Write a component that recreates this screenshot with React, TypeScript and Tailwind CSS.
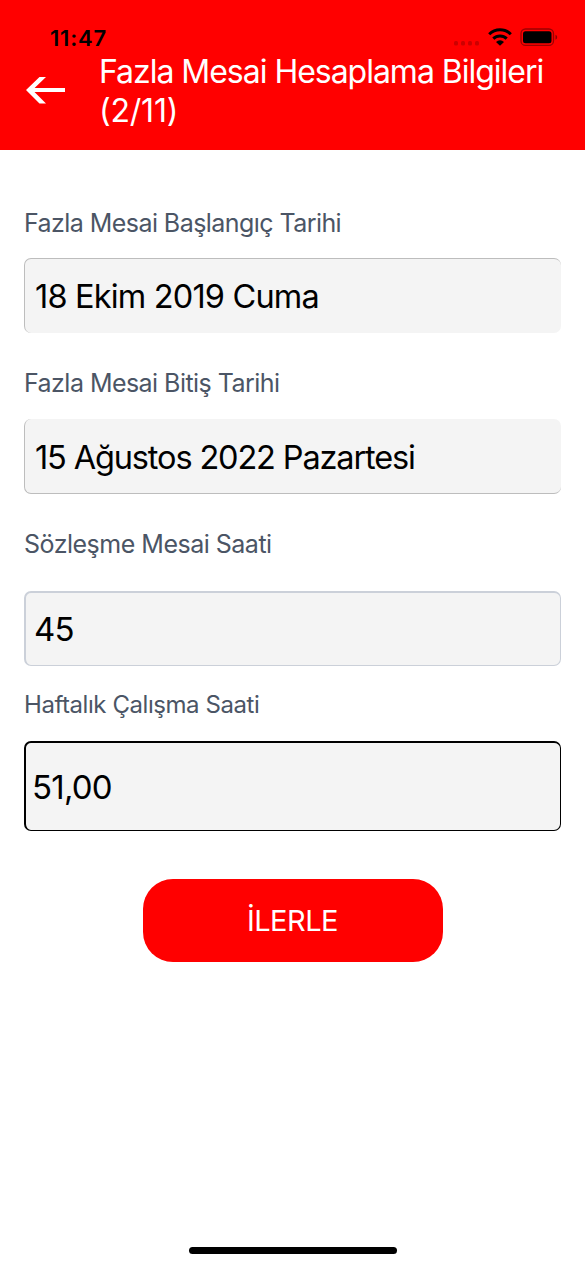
import { useState } from 'react';

interface Field {
  id: string;
  label: string;
  value: string;
  labelClass: string;
  boxClass: string;
}

const fields: Field[] = [
  {
    id: 'start',
    label: 'Fazla Mesai Başlangıç Tarihi',
    value: '18 Ekim 2019 Cuma',
    labelClass: 'mb-4 text-[25px] tracking-[-0.56px]',
    boxClass: 'h-[75px] border-t border-l border-[#bdbdbd] pl-[10px] text-[32.5px] tracking-[-0.82px]',
  },
  {
    id: 'end',
    label: 'Fazla Mesai Bitiş Tarihi',
    value: '15 Ağustos 2022 Pazartesi',
    labelClass: 'mt-[31px] mb-[17px] text-[25px] tracking-[-0.54px]',
    boxClass: 'h-[75px] border-b border-l border-[#bdbdbd] pl-[10px] pt-[2px] text-[32.5px] tracking-[-1.14px]',
  },
  {
    id: 'contract',
    label: 'Sözleşme Mesai Saati',
    value: '45',
    labelClass: 'mt-[31px] mb-7 text-[25px] tracking-[-0.5px]',
    boxClass: 'h-[75px] border border-t-2 border-l-2 border-[#cbd0d9] pl-[8px] text-[33px] tracking-[-0.8px]',
  },
  {
    id: 'weekly',
    label: 'Haftalık Çalışma Saati',
    value: '51,00',
    labelClass: 'mt-5 mb-[17px] text-[24px] tracking-[-0.44px]',
    boxClass: 'h-[90px] border border-t-2 border-l-2 border-black pl-[6px] text-[33px] tracking-[-0.8px]',
  },
];

function StatusIcons() {
  return (
    <svg width="106" height="20" viewBox="0 0 106 20" aria-hidden="true">
      <g fill="#cc0000">
        <rect x="1" y="14" width="4" height="4.5" rx="1.5" />
        <rect x="8" y="14" width="4" height="4.5" rx="1.5" />
        <rect x="15" y="14" width="4" height="4.5" rx="1.5" />
        <rect x="22" y="14" width="4" height="4.5" rx="1.5" />
      </g>
      {/* wifi */}
      <g fill="none" stroke="#000" strokeWidth="3">
        <path d="M36.2 7.2a15.4 15.4 0 0 1 21.6 0" />
        <path d="M40.3 11.6a9.6 9.6 0 0 1 13.4 0" />
      </g>
      <path d="M47 18.8 43 14.9a5.8 5.8 0 0 1 8 0Z" />
      {/* battery */}
      <rect x="68" y="2" width="32.5" height="16.4" rx="4.5" fill="none" stroke="#9c0000" strokeWidth="1.3" />
      <rect x="70" y="4.2" width="28.5" height="12" rx="2.5" />
      <path d="M102.5 7.7v5c2.2-.8 2.2-4.2 0-5Z" fill="#8c0000" />
    </svg>
  );
}

function BackArrow() {
  return (
    <svg width="40" height="28" viewBox="0 0 40 28" aria-hidden="true">
      <path d="M39 14H4" stroke="#fff" strokeWidth="4" />
      <path d="M13.5 1H20L6.5 14 20 27.5H13.5L0 14Z" fill="#fff" />
    </svg>
  );
}

function FormField({ field, onChange }: { field: Field; onChange: (value: string) => void }) {
  return (
    <div className="flex flex-col">
      <label htmlFor={field.id} className={`h-[38px] leading-[38px] whitespace-nowrap text-[#4b5565] ${field.labelClass}`}>
        {field.label}
      </label>
      <input
        id={field.id}
        type="text"
        value={field.value}
        onChange={(e) => onChange(e.target.value)}
        className={`w-full rounded-[7px] bg-[#f4f4f4] text-black outline-none ${field.boxClass}`}
      />
    </div>
  );
}

export default function App() {
  const [values, setValues] = useState<Record<string, string>>({});

  return (
    <div className="flex h-[1266px] w-[585px] flex-col overflow-hidden bg-white font-['Inter',sans-serif]">
      <header className="h-[150px] shrink-0 bg-[#ff0000]">
        <div className="flex h-[52px] items-start justify-between pt-[27px] pr-[26px] pl-[50px]">
          <span className="text-[22px] leading-[22px] font-semibold tracking-[0.8px] text-black">11:47</span>
          <StatusIcons />
        </div>
        <div className="flex items-start pl-[26px]">
          <button type="button" aria-label="Geri" className="mt-6 shrink-0">
            <BackArrow />
          </button>
          <h1 className="ml-[33px] w-[460px] text-[32px] leading-[39px] tracking-[-1.02px] text-white">
            Fazla Mesai Hesaplama Bilgileri <span className="tracking-[-0.2px]">(2/11)</span>
          </h1>
        </div>
      </header>

      <main className="flex flex-1 flex-col px-6 pt-[54px]">
        {fields.map((field) => (
          <FormField
            key={field.id}
            field={{ ...field, value: values[field.id] ?? field.value }}
            onChange={(value) => setValues({ ...values, [field.id]: value })}
          />
        ))}
        <button
          type="button"
          className="mt-12 h-[83px] w-[300px] self-center rounded-[30px] bg-[#ff0000] text-[29px] tracking-[-0.5px] text-white"
        >
          İLERLE
        </button>
      </main>

      <div className="mb-3 h-[7px] w-[208px] self-center rounded-full bg-black" />
    </div>
  );
}
